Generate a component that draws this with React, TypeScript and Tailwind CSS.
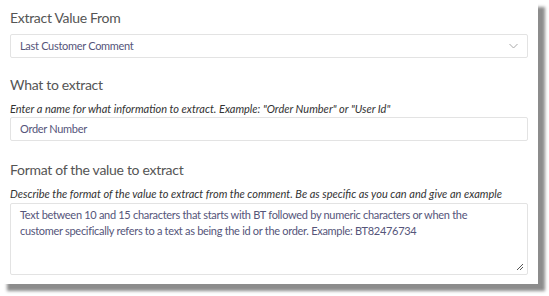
import React from 'react';

const fontStack = { fontFamily: 'Lato, "Open Sans", sans-serif' };

const ChevronDown: React.FC = () => (
  <svg width="9" height="6" viewBox="0 0 9 6" fill="none" className="text-[#a8a8a8]">
    <path d="M0.5 1 L4.5 5 L8.5 1" stroke="currentColor" strokeWidth="1" />
  </svg>
);

const App: React.FC = () => {
  const formatText =
    'Text between 10 and 15 characters that starts with BT followed by numeric characters or when the\ncustomer specifically refers to a text as being the id or the order. Example: BT82476734';

  return (
    <div className="w-[549px] h-[296px] bg-white" style={fontStack}>
      <div className="w-[538px] h-[284px] bg-white px-[10px] pt-[8px] shadow-[7px_7px_3px_rgba(0,0,0,0.45)]">
        {/* Extract value from */}
        <h2 className="text-[14px] leading-[20px] tracking-[-0.3px] text-[#555555]">Extract Value From</h2>
        <div className="mt-[6px] h-[24px] border border-[#e3e3e3] rounded-[2px] flex items-center justify-between pl-[9px] pr-[9px]">
          <span className="text-[11px] tracking-[-0.3px] text-[#55557a]">Last Customer Comment</span>
          <ChevronDown />
        </div>

        {/* What to extract */}
        <h2 className="mt-[17px] text-[14px] leading-[20px] tracking-[-0.3px] text-[#555555]">What to extract</h2>
        <p className="mt-[7px] text-[11px] leading-[14px] italic text-[#333333]">
          Enter a name for what information to extract. Example: "Order Number" or "User Id"
        </p>
        <div className="mt-[1px] h-[24px] border border-[#e3e3e3] rounded-[2px] flex items-center pl-[9px]">
          <span className="text-[11px] tracking-[-0.3px] text-[#55557a]">Order Number</span>
        </div>

        {/* Format */}
        <h2 className="mt-[19px] text-[14px] leading-[20px] tracking-[-0.3px] text-[#555555]">Format of the value to extract</h2>
        <p className="mt-[7px] text-[11px] leading-[14px] italic text-[#333333]">
          Describe the format of the value to extract from the comment. Be as specific as you can and give an example
        </p>
        <div className="relative mt-[2px] h-[72px] border border-[#e3e3e3] rounded-[2px] pl-[9px] pt-[3px]">
          <p className="text-[11px] leading-[16px] tracking-[-0.3px] text-[#55557a] whitespace-pre-line">{formatText}</p>
          <svg width="8" height="8" viewBox="0 0 8 8" className="absolute right-[3px] bottom-[3px]">
            <path d="M7 1 L1 7 M7 4 L4 7" stroke="#555" strokeWidth="1" />
          </svg>
        </div>
      </div>
    </div>
  );
};

export default App;
